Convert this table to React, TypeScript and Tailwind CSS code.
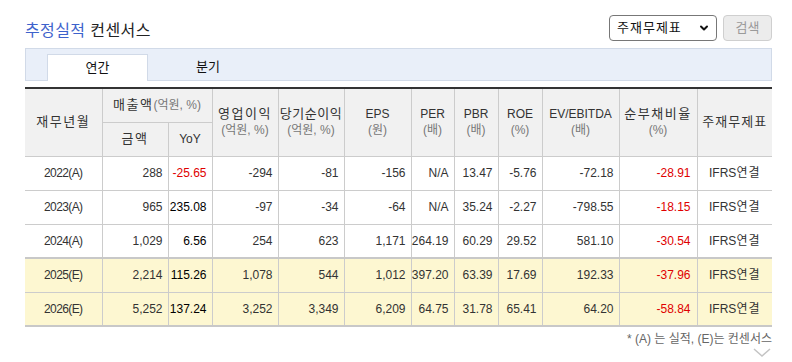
import { ChevronDown } from 'lucide-react';

type Row = {
  period: string;
  sales: string;
  yoy: string;
  op: string;
  net: string;
  eps: string;
  per: string;
  pbr: string;
  roe: string;
  ev: string;
  debt: string;
  est?: boolean;
};

const rows: Row[] = [
  { period: '2022(A)', sales: '288', yoy: '-25.65', op: '-294', net: '-81', eps: '-156', per: 'N/A', pbr: '13.47', roe: '-5.76', ev: '-72.18', debt: '-28.91' },
  { period: '2023(A)', sales: '965', yoy: '235.08', op: '-97', net: '-34', eps: '-64', per: 'N/A', pbr: '35.24', roe: '-2.27', ev: '-798.55', debt: '-18.15' },
  { period: '2024(A)', sales: '1,029', yoy: '6.56', op: '254', net: '623', eps: '1,171', per: '264.19', pbr: '60.29', roe: '29.52', ev: '581.10', debt: '-30.54' },
  { period: '2025(E)', sales: '2,214', yoy: '115.26', op: '1,078', net: '544', eps: '1,012', per: '397.20', pbr: '63.39', roe: '17.69', ev: '192.33', debt: '-37.96', est: true },
  { period: '2026(E)', sales: '5,252', yoy: '137.24', op: '3,252', net: '3,349', eps: '6,209', per: '64.75', pbr: '31.78', roe: '65.41', ev: '64.20', debt: '-58.84', est: true },
];

const widths = [77, 66, 44, 66, 66, 67, 43, 44, 44, 77, 78, 75];

const th = 'border border-[#cccccc] bg-[#f1f1f1] font-normal text-[#333] leading-[16px] align-middle';
const ko = 'text-[13px] tracking-[1.5px]';
const sub = 'text-[#777] text-[12px] tracking-normal';
const num = 'border border-[#cccccc] text-right pr-[5px] text-[#333]';

export default function App() {
  return (
    <div className="w-[792px] h-[362px] bg-white overflow-hidden text-[12px]" style={{ fontFamily: '"Liberation Sans", "Noto Sans CJK KR", sans-serif' }}>
      <div className="px-[25px] pr-[20px] pt-[15px]">
        <div className="flex items-center justify-between h-[26px]">
          <h2 className="text-[16px] font-normal tracking-[0.4px] pt-[6px]">
            <span className="text-[#3d62cc]">추정실적</span>
            <span className="text-[#222]"> 컨센서스</span>
          </h2>
          <div className="flex items-center gap-[6px]">
            <div className="w-[108px] h-[26px] rounded-[4px] border border-[#777] flex items-center justify-between pl-[7px] pr-[6px] text-[13px] tracking-[1px] text-[#111]">
              <span>주재무제표</span>
              <ChevronDown className="w-[12px] h-[12px]" strokeWidth={4} />
            </div>
            <div className="w-[49px] h-[26px] rounded-[4px] border border-[#cfcfcf] bg-[#ececec] text-[#9a9a9a] text-[13px] flex items-center justify-center">
              검색
            </div>
          </div>
        </div>

        <div className="mt-[7px] h-[33px] bg-[#e9eff9] border border-[#d1dae8] flex items-end pl-[21px] gap-[10px]">
          <div className="w-[101px] h-[27px] bg-white border border-b-0 border-[#d1dae8] -mb-px flex items-center justify-center text-[13px] text-[#111]">
            연간
          </div>
          <div className="w-[100px] h-[27px] flex items-center justify-center text-[13px] text-[#111]">분기</div>
        </div>

        <table className="mt-[6px] border-collapse table-fixed w-[747px] border-t-2 border-t-[#333] border-b-2 border-b-[#c8c8c8]">
          <colgroup>
            {widths.map((w, i) => (
              <col key={i} style={{ width: w }} />
            ))}
          </colgroup>
          <thead>
            <tr className="h-[34px]">
              <th rowSpan={2} className={`${th} ${ko} border-l-0`}>재무년월</th>
              <th colSpan={2} className={`${th} ${ko}`}>
                매출액<span className={sub}>(억원, %)</span>
              </th>
              <th rowSpan={2} className={`${th} ${ko}`}>
                영업이익<br /><span className={sub}>(억원, %)</span>
              </th>
              <th rowSpan={2} className={`${th} text-[13px] tracking-[0.5px]`}>
                당기순이익<br /><span className={sub}>(억원, %)</span>
              </th>
              <th rowSpan={2} className={th}>
                EPS<br /><span className={sub}>(원)</span>
              </th>
              <th rowSpan={2} className={th}>
                PER<br /><span className={sub}>(배)</span>
              </th>
              <th rowSpan={2} className={th}>
                PBR<br /><span className={sub}>(배)</span>
              </th>
              <th rowSpan={2} className={th}>
                ROE<br /><span className={sub}>(%)</span>
              </th>
              <th rowSpan={2} className={th}>
                EV/EBITDA<br /><span className={sub}>(배)</span>
              </th>
              <th rowSpan={2} className={`${th} ${ko}`}>
                순부채비율<br /><span className={sub}>(%)</span>
              </th>
              <th rowSpan={2} className={`${th} text-[13px] tracking-[1px] border-r-0`}>주재무제표</th>
            </tr>
            <tr className="h-[34px]">
              <th className={`${th} ${ko}`}>금액</th>
              <th className={th}>YoY</th>
            </tr>
          </thead>
          <tbody>
            {rows.map((r, i) => (
              <tr
                key={r.period}
                className={`h-[34px] ${r.est ? 'bg-[#fdf7d1]' : ''} ${i === 3 ? 'border-t-2 border-t-[#c8c8c8]' : ''}`}
              >
                <td className="border border-[#cccccc] border-l-0 text-center text-[#333] tracking-[-0.6px]">{r.period}</td>
                <td className={num}>{r.sales}</td>
                <td className={`border border-[#cccccc] text-right pr-[5px] ${r.yoy.startsWith('-') ? 'text-[#e00000]' : 'text-black font-medium'}`}>{r.yoy}</td>
                <td className={num}>{r.op}</td>
                <td className={num}>{r.net}</td>
                <td className={num}>{r.eps}</td>
                <td className={num}>{r.per}</td>
                <td className={num}>{r.pbr}</td>
                <td className={num}>{r.roe}</td>
                <td className={num}>{r.ev}</td>
                <td className={`border border-[#cccccc] text-right pr-[6px] ${r.debt.startsWith('-') ? 'text-[#e00000]' : 'text-[#333]'}`}>{r.debt}</td>
                <td className="border border-[#cccccc] border-r-0 text-center text-[#333]">IFRS<span className="tracking-[1px]">연결</span></td>
              </tr>
            ))}
          </tbody>
        </table>

        <div className="w-[747px] flex justify-end pt-[3px] text-[12px] text-[#666]">* (A) 는 실적, (E)는 컨센서스</div>
        <div className="w-[747px] flex justify-end pr-[1px]">
          <svg width="18" height="10" viewBox="0 0 18 10" fill="none">
            <path d="M1 1 L9 8 L17 1" stroke="#c4c4c4" strokeWidth="1.5" />
          </svg>
        </div>
      </div>
    </div>
  );
}
